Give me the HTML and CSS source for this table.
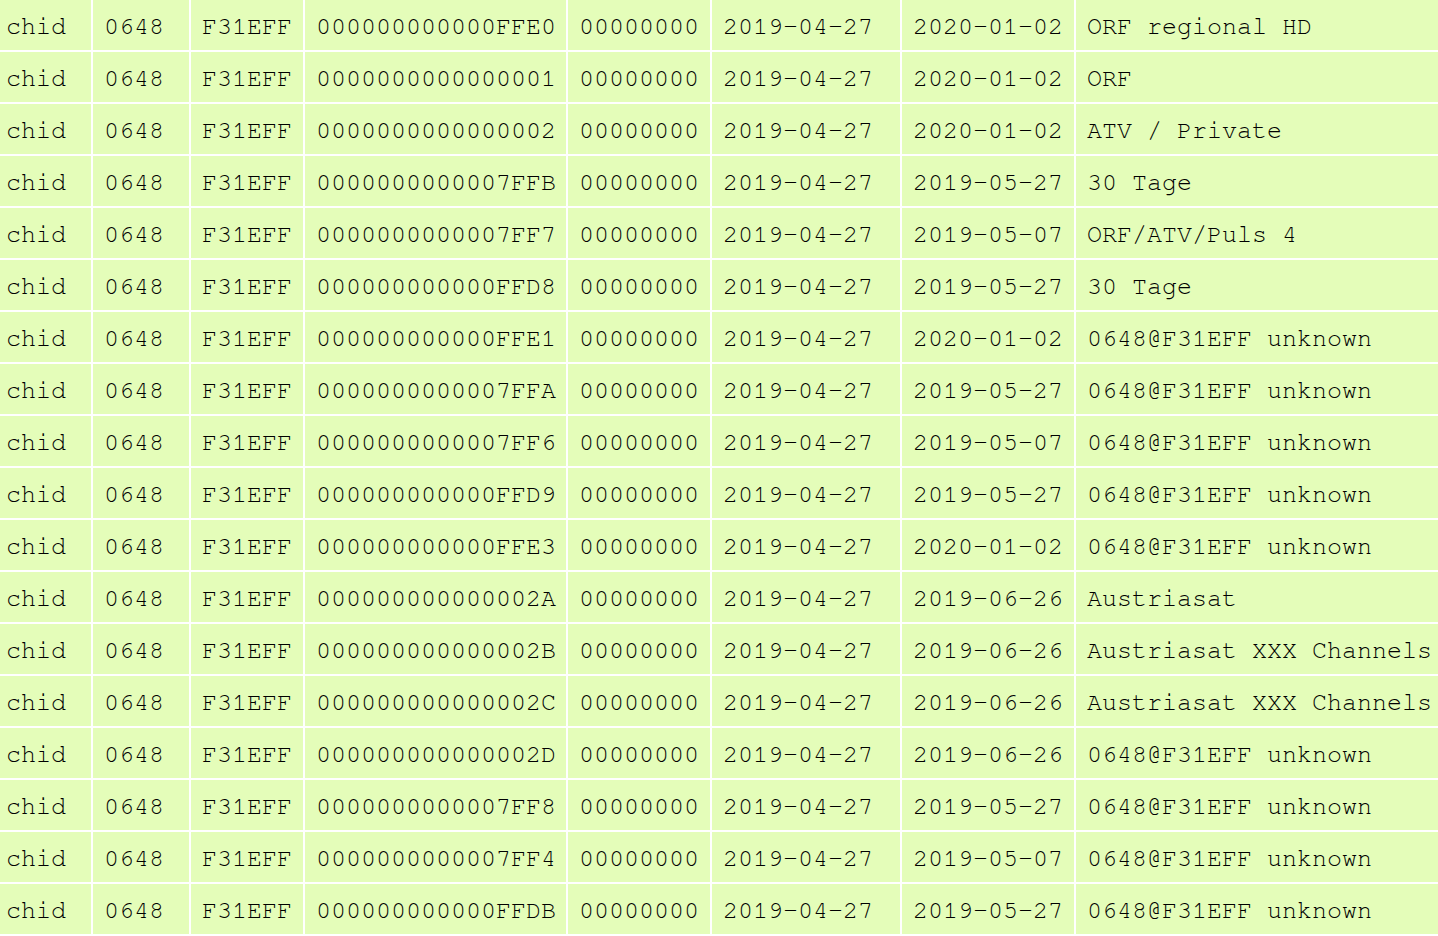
FILE: index.html
```html
<!DOCTYPE html>
<html>
<head>
<meta charset="utf-8">
<link rel="stylesheet" href="styles.css">
</head>
<body>
<table class="grid">
<colgroup>
<col class="c1"><col class="c2"><col class="c3"><col class="c4"><col class="c5"><col class="c6"><col class="c7"><col class="c8">
</colgroup>
<tbody>
<tr><td>chid</td><td>0648</td><td>F31EFF</td><td>000000000000FFE0</td><td>00000000</td><td>2019-04-27</td><td>2020-01-02</td><td>ORF regional HD</td></tr>
<tr><td>chid</td><td>0648</td><td>F31EFF</td><td>0000000000000001</td><td>00000000</td><td>2019-04-27</td><td>2020-01-02</td><td>ORF</td></tr>
<tr><td>chid</td><td>0648</td><td>F31EFF</td><td>0000000000000002</td><td>00000000</td><td>2019-04-27</td><td>2020-01-02</td><td>ATV / Private</td></tr>
<tr><td>chid</td><td>0648</td><td>F31EFF</td><td>0000000000007FFB</td><td>00000000</td><td>2019-04-27</td><td>2019-05-27</td><td>30 Tage</td></tr>
<tr><td>chid</td><td>0648</td><td>F31EFF</td><td>0000000000007FF7</td><td>00000000</td><td>2019-04-27</td><td>2019-05-07</td><td>ORF/ATV/Puls 4</td></tr>
<tr><td>chid</td><td>0648</td><td>F31EFF</td><td>000000000000FFD8</td><td>00000000</td><td>2019-04-27</td><td>2019-05-27</td><td>30 Tage</td></tr>
<tr><td>chid</td><td>0648</td><td>F31EFF</td><td>000000000000FFE1</td><td>00000000</td><td>2019-04-27</td><td>2020-01-02</td><td>0648@F31EFF unknown</td></tr>
<tr><td>chid</td><td>0648</td><td>F31EFF</td><td>0000000000007FFA</td><td>00000000</td><td>2019-04-27</td><td>2019-05-27</td><td>0648@F31EFF unknown</td></tr>
<tr><td>chid</td><td>0648</td><td>F31EFF</td><td>0000000000007FF6</td><td>00000000</td><td>2019-04-27</td><td>2019-05-07</td><td>0648@F31EFF unknown</td></tr>
<tr><td>chid</td><td>0648</td><td>F31EFF</td><td>000000000000FFD9</td><td>00000000</td><td>2019-04-27</td><td>2019-05-27</td><td>0648@F31EFF unknown</td></tr>
<tr><td>chid</td><td>0648</td><td>F31EFF</td><td>000000000000FFE3</td><td>00000000</td><td>2019-04-27</td><td>2020-01-02</td><td>0648@F31EFF unknown</td></tr>
<tr><td>chid</td><td>0648</td><td>F31EFF</td><td>000000000000002A</td><td>00000000</td><td>2019-04-27</td><td>2019-06-26</td><td>Austriasat</td></tr>
<tr><td>chid</td><td>0648</td><td>F31EFF</td><td>000000000000002B</td><td>00000000</td><td>2019-04-27</td><td>2019-06-26</td><td>Austriasat XXX Channels</td></tr>
<tr><td>chid</td><td>0648</td><td>F31EFF</td><td>000000000000002C</td><td>00000000</td><td>2019-04-27</td><td>2019-06-26</td><td>Austriasat XXX Channels</td></tr>
<tr><td>chid</td><td>0648</td><td>F31EFF</td><td>000000000000002D</td><td>00000000</td><td>2019-04-27</td><td>2019-06-26</td><td>0648@F31EFF unknown</td></tr>
<tr><td>chid</td><td>0648</td><td>F31EFF</td><td>0000000000007FF8</td><td>00000000</td><td>2019-04-27</td><td>2019-05-27</td><td>0648@F31EFF unknown</td></tr>
<tr><td>chid</td><td>0648</td><td>F31EFF</td><td>0000000000007FF4</td><td>00000000</td><td>2019-04-27</td><td>2019-05-07</td><td>0648@F31EFF unknown</td></tr>
<tr><td>chid</td><td>0648</td><td>F31EFF</td><td>000000000000FFDB</td><td>00000000</td><td>2019-04-27</td><td>2019-05-27</td><td>0648@F31EFF unknown</td></tr>
</tbody>
</table>
</body>
</html>
```
FILE: styles.css
```css
html, body {
  margin: 0;
  padding: 0;
  background: #ffffff;
  overflow: hidden;
}
.grid {
  table-layout: fixed;
  width: 1455px;
  border-collapse: separate;
  border-spacing: 2px;
  margin: -2px 0 0 -7px;
  font-family: "Nimbus Mono PS", "Nimbus Mono L", "FreeMono", "Courier New", "Liberation Mono", monospace;
  font-size: 25px;
  color: #000000;
}
.grid td {
  background: #e4fdb9;
  height: 47px;
  padding: 3px 12px 0 11px;
  line-height: 47px;
  white-space: nowrap;
  overflow: hidden;
  vertical-align: middle;
}
.c1 { width: 96px; }
.c2 { width: 96px; }
.c3 { width: 112px; }
.c4 { width: 261px; }
.c5 { width: 142px; }
.c6 { width: 188px; }
.c7 { width: 172px; }
.c8 { width: 370px; }
```
